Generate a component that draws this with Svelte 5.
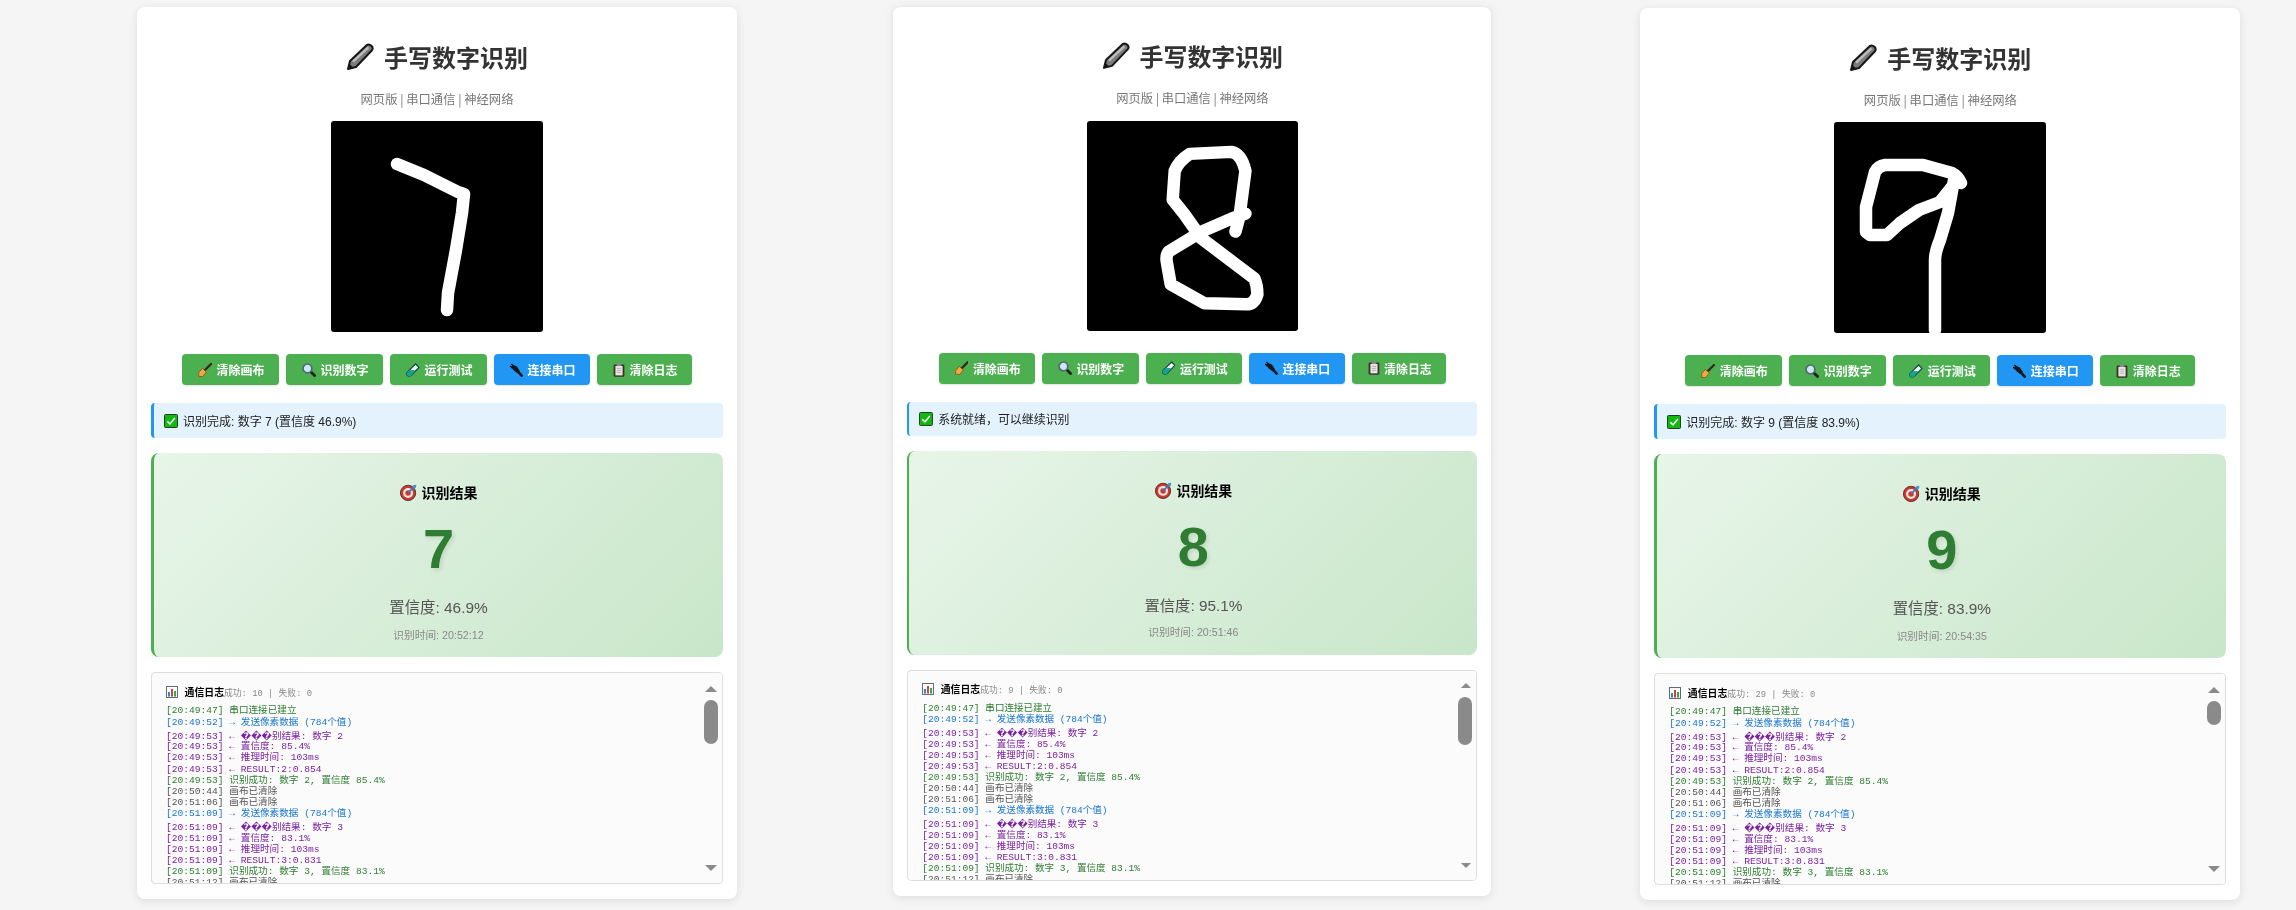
<script>
  const cards = [
    {
      cls: 'a', status: '识别完成: 数字 7 (置信度 46.9%)', digit: '7', conf: '46.9%', time: '20:52:12', ok: 10, thumb: 44,
      stroke: 'M66 43 L93 54 L127 71 Q131 72 133 73 L131 92 L125 129 L117 172 L116 189'
    },
    {
      cls: 'b', status: '系统就绪，可以继续识别', digit: '8', conf: '95.1%', time: '20:51:46', ok: 9, thumb: 48,
      stroke: 'M159 93 L145 98 L115 111 L82 131 Q79 135 80 141 L84 164 L118 183 L160 184 Q168 184 171 174 Q171 165 168 158 L115 118 L98 94 L86 79 L88 50 Q92 40 103 33 L145 31 Q155 33 159 50 L153 96 L149 111'
    },
    {
      cls: 'c', status: '识别完成: 数字 9 (置信度 83.9%)', digit: '9', conf: '83.9%', time: '20:54:35', ok: 29, thumb: 24,
      stroke: 'M127 61 Q124 54 118 51 L89 43 L51 43 Q44 44 41 50 L32 85 L32 110 L36 113 L53 113 L66 101 L85 88 L106 80 L118 65 M120 58 L114 91 L106 118 Q101 130 101 138 L101 208'
    }
  ];

  const buttons = [
    { label: '清除画布', icon: 'broom' },
    { label: '识别数字', icon: 'glass' },
    { label: '运行测试', icon: 'tube' },
    { label: '连接串口', icon: 'plug', blue: true },
    { label: '清除日志', icon: 'clip' }
  ];

  const bad = '\uFFFD\uFFFD\uFFFD';

  const logLines = [
    ['ok', '[20:49:47] 串口连接已建立'],
    ['send', '[20:49:52] → 发送像素数据 (784个值)'],
    ['recv tall', '[20:49:53] ← ', '别结果: 数字 2'],
    ['recv', '[20:49:53] ← 置信度: 85.4%'],
    ['recv', '[20:49:53] ← 推理时间: 103ms'],
    ['recv', '[20:49:53] ← RESULT:2:0.854'],
    ['ok', '[20:49:53] 识别成功: 数字 2, 置信度 85.4%'],
    ['info', '[20:50:44] 画布已清除'],
    ['info', '[20:51:06] 画布已清除'],
    ['send', '[20:51:09] → 发送像素数据 (784个值)'],
    ['recv tall', '[20:51:09] ← ', '别结果: 数字 3'],
    ['recv', '[20:51:09] ← 置信度: 83.1%'],
    ['recv', '[20:51:09] ← 推理时间: 103ms'],
    ['recv', '[20:51:09] ← RESULT:3:0.831'],
    ['ok', '[20:51:09] 识别成功: 数字 3, 置信度 83.1%'],
    ['info', '[20:51:12] 画布已清除']
  ];
</script>

{#snippet icon(name)}
  {#if name === 'broom'}
    <svg class="ico" viewBox="0 0 14 14">
      <path d="M6 8 L13 1" stroke="#33251a" stroke-width="2.2" stroke-linecap="round" />
      <path d="M4.4 5.4 L8.4 9 L4.6 13.6 L.6 13.4 L.8 9.4 Z" fill="#f4a63f" stroke="#7a4a12" stroke-width=".7" />
    </svg>
  {:else if name === 'glass'}
    <svg class="ico" viewBox="0 0 14 14">
      <path d="M8.2 8.2 L12.6 12.6" stroke="#222" stroke-width="2.8" stroke-linecap="round" />
      <circle cx="5.4" cy="5.4" r="4.4" fill="#c9e8f8" stroke="#56656f" stroke-width="1.7" />
    </svg>
  {:else if name === 'tube'}
    <svg class="ico" viewBox="0 0 14 14">
      <path d="M9.6 1 L13 4.4 L5.2 12.4 Q3 14 1.4 12.6 Q0 11 1.6 8.8 Z" fill="#e6f7f5" stroke="#123a36" stroke-width="1.1" />
      <path d="M6 7 L9 7 L5.2 12.4 Q3 14 1.4 12.6 Q0 11 1.6 8.8 L3.6 7.2 Z" fill="#12a394" />
    </svg>
  {:else if name === 'plug'}
    <svg class="ico plug" viewBox="0 0 14 14">
      <path d="M1.5 .6 L4.4 3.4 M.2 2.6 L3 5.4" stroke="#111" stroke-width="1.4" />
      <path d="M3 1.4 L7.4 3.2 L10.6 8 L8 10.6 L3.8 7.4 L1.4 3.2 Z" fill="#14171c" />
      <path d="M8.4 8.4 L12.6 13" stroke="#14171c" stroke-width="2.8" stroke-linecap="round" />
    </svg>
  {:else if name === 'clip'}
    <svg class="ico clip" viewBox="0 0 12 14">
      <rect x=".6" y="1.4" width="10.8" height="12.4" rx="1.4" fill="#3f3125" />
      <rect x="2.4" y="3" width="7.2" height="9.4" fill="#e6e6e6" />
      <path d="M3.8 5.4 H8.2 M3.8 7.4 H8.2 M3.8 9.4 H8.2" stroke="#a9a9a9" stroke-width=".8" />
      <rect x="3.6" y=".2" width="4.8" height="2.8" rx=".6" fill="#858a8e" />
    </svg>
  {/if}
{/snippet}

<div class="page">
  {#each cards as card}
    <section class="card {card.cls}">
      <h1 class="title">
        <svg class="pencil" viewBox="0 0 28 28">
          <path d="M2 26 L4 18 L20.6 2.2 Q23 .6 25.4 2.8 Q27.6 5 26 7.2 L10 24 Z" fill="#7c7c7c" stroke="#161616" stroke-width="2" stroke-linejoin="round" />
          <path d="M7 18.6 L22.4 4.4" stroke="#bdbdbd" stroke-width="2.4" />
          <path d="M2 26 L3.4 20.8 L7.2 24.6 Z" fill="#161616" />
        </svg>
        <span>手写数字识别</span>
      </h1>
      <p class="subtitle">网页版 | 串口通信 | 神经网络</p>

      <svg class="digit-canvas" viewBox="0 0 212 211">
        <path d={card.stroke} />
      </svg>

      <div class="buttons">
        {#each buttons as b}
          <button class="btn" class:blue={b.blue}>
            {@render icon(b.icon)}
            <span>{b.label}</span>
          </button>
        {/each}
      </div>

      <div class="status">
        <svg class="check" viewBox="0 0 14 14">
          <rect x=".5" y=".5" width="13" height="13" rx="1" fill="#10b810" stroke="#233f23" />
          <path d="M3.4 7.4 L6 10 L10.8 4" fill="none" stroke="#fff" stroke-width="1.5" />
        </svg>
        <span>{card.status}</span>
      </div>

      <div class="result">
        <div class="result-title">
          <svg class="target" viewBox="0 0 16 16">
            <circle cx="7.6" cy="8.4" r="7.2" fill="#d5352b" stroke="#3c2a2a" stroke-width=".8" />
            <circle cx="7.6" cy="8.4" r="4.7" fill="#f5e9e4" />
            <circle cx="7.6" cy="8.4" r="2.6" fill="#d5352b" />
            <path d="M7.6 8.4 L14 2" stroke="#2f7fc9" stroke-width="1.7" />
            <path d="M12 1.2 L15.4 .6 L15 4 Z" fill="#2f93e0" />
          </svg>
          <span>识别结果</span>
        </div>
        <div class="digit">{card.digit}</div>
        <div class="confidence">置信度: {card.conf}</div>
        <div class="time">识别时间: {card.time}</div>
      </div>

      <div class="log">
        <div class="log-head">
          <svg class="chart" viewBox="0 0 12 12">
            <rect x=".5" y=".5" width="11" height="11" fill="#fff" stroke="#5f6b76" />
            <rect x="2" y="6" width="2" height="4.6" fill="#2f86d8" />
            <rect x="5" y="3" width="2" height="7.6" fill="#d8402f" />
            <rect x="8" y="5" width="2" height="5.6" fill="#35a848" />
          </svg>
          <strong>通信日志</strong><span class="stats">成功: {card.ok} | 失败: 0</span>
        </div>
        {#each logLines as [kind, text, rest]}
          <div class="line {kind}">{text}{#if rest}<b class="bad">{bad}</b>{rest}{/if}</div>
        {/each}
        <div class="scrollbar">
          <i class="arrow up"></i>
          <i class="thumb" style="height: {card.thumb}px"></i>
          <i class="arrow down"></i>
        </div>
      </div>
    </section>
  {/each}
</div>

<style>
  :global(body) {
    margin: 0;
    background: #f5f5f5;
  }

  .page {
    display: flex;
    align-items: flex-start;
    width: 2296px;
    height: 910px;
    box-sizing: border-box;
    padding-left: 137px;
    overflow: hidden;
    background: #f5f5f5;
    font-family: "Liberation Sans", "Noto Sans CJK SC", sans-serif;
    filter: blur(0.35px);
  }

  .card {
    flex: none;
    box-sizing: border-box;
    width: 600px;
    margin-top: 7px;
    padding: 32.5px 14px 15px;
    background: #fff;
    border-radius: 8px;
    box-shadow: 0 2px 10px rgba(0, 0, 0, 0.1);
  }
  .card.b {
    margin-left: 157px;
    zoom: 0.9965;
  }
  .card.c {
    margin-top: 8px;
    margin-left: 149px;
  }

  .title {
    display: flex;
    justify-content: center;
    align-items: center;
    gap: 10px;
    margin: 0;
    height: 34px;
    font-family: "Noto Sans CJK SC", sans-serif;
    font-size: 24px;
    font-weight: 700;
    line-height: 34px;
    color: #333;
  }
  .pencil {
    width: 28px;
    height: 28px;
  }

  .subtitle {
    margin: 17.5px 0 0;
    font-family: "Noto Sans CJK SC", sans-serif;
    font-size: 12.3px;
    line-height: 16px;
    text-align: center;
    color: #777;
  }

  .digit-canvas {
    display: block;
    width: 212px;
    height: 211px;
    margin: 14px auto 0;
    background: #000;
    border-radius: 3px;
  }
  .digit-canvas path {
    fill: none;
    stroke: #fff;
    stroke-width: 12.5;
    stroke-linecap: round;
    stroke-linejoin: round;
  }

  .buttons {
    display: flex;
    justify-content: center;
    gap: 7px;
    margin-top: 22px;
  }
  .btn {
    display: flex;
    align-items: center;
    gap: 4.5px;
    height: 31px;
    padding: 0 14.5px 0 16px;
    border: 0;
    border-radius: 4px;
    background: #4caf50;
    color: #fff;
    font-family: "Noto Sans CJK SC", sans-serif;
    font-size: 12px;
    font-weight: 700;
    box-shadow: 0 1px 2px rgba(0, 0, 0, 0.12);
  }
  .btn.blue {
    background: #2196f3;
  }
  .ico {
    width: 14px;
    height: 14px;
  }
  .ico.plug {
    width: 13px;
  }
  .ico.clip {
    width: 12px;
  }

  .status {
    display: flex;
    align-items: center;
    gap: 5px;
    height: 35px;
    margin-top: 18px;
    padding-left: 10px;
    border-left: 3px solid #2196f3;
    border-radius: 4px;
    background: #e3f2fd;
    font-size: 12px;
    color: #222;
  }
  .check {
    width: 14px;
    height: 14px;
  }

  .result {
    display: flex;
    flex-direction: column;
    align-items: center;
    margin-top: 15px;
    padding: 29px 0 15px;
    border-left: 3px solid #4caf50;
    border-radius: 8px;
    background: linear-gradient(135deg, #e8f5e9, #c8e6c9);
  }
  .result-title {
    display: flex;
    align-items: center;
    gap: 5px;
    height: 20px;
    font-family: "Noto Sans CJK SC", sans-serif;
    font-size: 14px;
    font-weight: 700;
    color: #000;
  }
  .target {
    width: 17px;
    height: 17px;
  }
  .digit {
    margin-top: 15px;
    font-size: 56px;
    font-weight: 700;
    line-height: 64px;
    color: #2e7d32;
    text-shadow: 2px 2px 4px rgba(0, 0, 0, 0.1);
  }
  .confidence {
    margin-top: 17px;
    font-size: 15.4px;
    line-height: 20px;
    color: #555;
  }
  .time {
    margin-top: 10px;
    font-size: 10.7px;
    line-height: 14px;
    color: #888;
  }

  .log {
    position: relative;
    box-sizing: border-box;
    height: 212px;
    margin-top: 15px;
    padding: 12px 14px 0;
    overflow: hidden;
    border: 1px solid #ddd;
    border-radius: 4px;
    background: #fbfbfb;
    font-family: "Liberation Mono", "Noto Sans CJK SC", monospace;
    font-size: 9.6px;
  }
  .log-head {
    display: flex;
    align-items: center;
    height: 14px;
    margin-bottom: 6.4px;
    color: #888;
  }
  .log-head strong {
    margin-left: 6.5px;
    font-family: "Noto Sans CJK SC", sans-serif;
    font-size: 9.9px;
    color: #000;
  }
  .stats {
    font-size: 8.8px;
  }
  .chart {
    width: 12px;
    height: 12px;
  }
  .line {
    height: 11.13px;
    line-height: 11.13px;
    white-space: pre;
  }
  .line.tall {
    height: 13.7px;
    line-height: 16px;
  }
  .bad {
    font-family: "DejaVu Sans", sans-serif;
    font-size: 9.3px;
    font-weight: 700;
  }
  .ok {
    color: #2e7d32;
  }
  .send {
    color: #1976d2;
  }
  .recv {
    color: #7b1fa2;
  }
  .info {
    color: #555;
  }

  .scrollbar {
    position: absolute;
    top: 0;
    right: 0;
    bottom: 0;
    width: 24px;
    background: #fbfbfb;
  }
  .arrow {
    position: absolute;
    right: 5px;
    width: 0;
    height: 0;
    border-left: 6px solid transparent;
    border-right: 6px solid transparent;
  }
  .arrow.up {
    top: 13px;
    border-bottom: 6px solid #8a8a8a;
  }
  .arrow.down {
    bottom: 12px;
    border-top: 6px solid #8a8a8a;
  }
  .thumb {
    position: absolute;
    top: 27px;
    right: 4px;
    width: 14px;
    border-radius: 7px;
    background: #8a8a8a;
  }
</style>
